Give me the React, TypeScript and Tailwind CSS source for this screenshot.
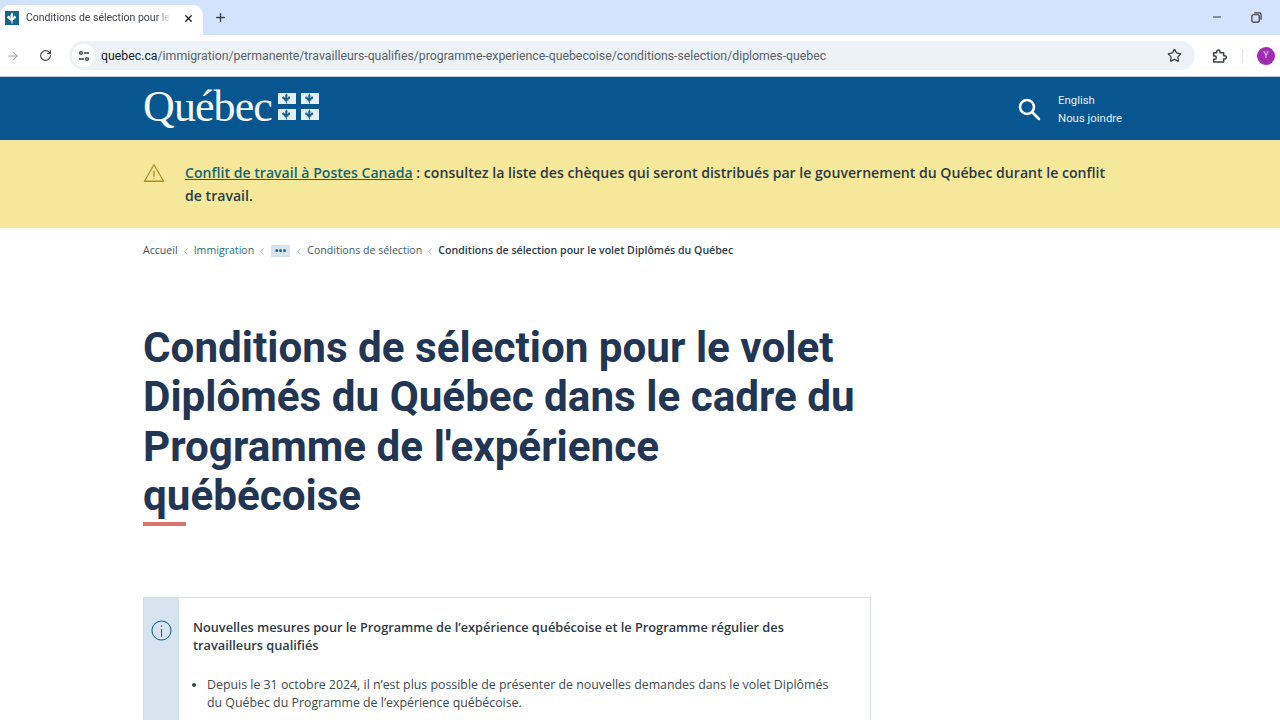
import React from "react";
import { ArrowRight, RotateCw, Star, Plus, X, Minus } from "lucide-react";

const Lis = ({ className = "", fill = "#fff" }: { className?: string; fill?: string }) => (
  <svg viewBox="0 0 24 24" className={className} fill={fill}>
    <path d="M12 1c2.2 2.2 3 4.6 1.6 8l-.5 2h1.2l.6-2c.6-1.4 2.2-1.9 3.6-1.2 1.7.8 2.1 3 1.2 4.4-.9 1.3-2.6 1.9-3.4 1 .4 1.2.1 2.3-1.1 3h-.6l-1.4.5.7 1.8c-1.2 0-1.9-.5-2.6-1.3-.7.8-1.4 1.3-2.6 1.3l.7-1.8-1.4-.5h-.6c-1.2-.7-1.5-1.8-1.1-3-.8.9-2.5.3-3.4-1-.9-1.4-.5-3.6 1.2-4.4 1.4-.7 3-.2 3.6 1.2l.6 2h1.2l-.5-2C9 5.6 9.8 3.2 12 1z" />
    <path d="M10.9 18h2.2v5h-2.2z" />
  </svg>
);

const Flag = () => (
  <div className="grid grid-cols-2 gap-x-[5px] gap-y-[5px] ml-[6px] -mt-[5px]">
    {[0, 1, 2, 3].map((i) => (
      <div key={i} className="w-[18px] h-[11px] bg-[#e4f0f6] flex items-center justify-center">
        <Lis className="w-[11px] h-[11px]" fill="#17648f" />
      </div>
    ))}
  </div>
);

const Sep = () => (
  <svg viewBox="0 0 4 8" className="w-[4px] h-[7px] mx-[6px] shrink-0" fill="none" stroke="#9aa5ae" strokeWidth="0.9">
    <path d="M3.5 0.5 L0.6 4 L3.5 7.5" />
  </svg>
);

export default function App() {
  return (
    <div className="w-[1280px] h-[720px] overflow-hidden bg-white font-['Open_Sans',sans-serif] text-[#223654]">
      {/* tab strip */}
      <div className="h-[35px] bg-[#d3e3fd] flex items-end relative">
        <div className="w-[203px] h-[30px] bg-white rounded-t-[10px] flex items-center pl-[5px] pb-[4px] font-['Roboto',sans-serif]">
          <div className="w-[14px] h-[14px] bg-[#17648f] flex items-center justify-center shrink-0">
            <Lis className="w-[12px] h-[12px]" />
          </div>
          <span className="ml-[7px] text-[10.5px] text-[#3f4347] whitespace-nowrap overflow-hidden w-[145px] [mask-image:linear-gradient(to_right,black_90%,transparent)]">
            Conditions de sélection pour le volet
          </span>
          <X className="w-[11px] h-[11px] ml-[12px] text-[#202124]" strokeWidth={3} />
        </div>
        <Plus className="w-[13px] h-[13px] ml-[11px] mb-[11px] text-[#3c4043]" strokeWidth={2.5} />
        <div className="ml-auto flex items-center mb-[12px]">
          <Minus className="w-[12px] h-[12px] text-[#333]" strokeWidth={2} />
          <svg viewBox="0 0 12 12" className="w-[11px] h-[11px] ml-[28px] mr-[18px]" fill="none" stroke="#333" strokeWidth="1.3">
            <rect x="1" y="3" width="8" height="8" rx="1.5" />
            <path d="M3.5 1h5.5a2 2 0 0 1 2 2v5.5" />
          </svg>
        </div>
      </div>
      {/* toolbar */}
      <div className="h-[41px] bg-white flex items-center border-b border-[#b9cddb] box-content">
        <ArrowRight className="w-[14px] h-[14px] ml-[6px] text-[#9aa0a6]" strokeWidth={1.75} />
        <RotateCw className="w-[13px] h-[13px] ml-[19px] text-[#3c4043]" strokeWidth={2} />
        <div className="ml-[17px] w-[1126px] h-[29px] rounded-full bg-[#edf2f6] flex items-center">
          <div className="w-[23px] h-[23px] ml-[3px] rounded-full bg-white flex items-center justify-center">
            <svg viewBox="0 0 12 12" className="w-[12px] h-[12px]" fill="none" stroke="#3c4043" strokeWidth="1.3">
              <circle cx="3" cy="3" r="1.4" />
              <path d="M6 3h5M1 9h5" />
              <circle cx="9" cy="9" r="1.4" />
            </svg>
          </div>
          <span className="ml-[6px] pt-[1px] text-[12.3px] font-['Roboto',sans-serif] text-[#5b6168] whitespace-nowrap">
            <span className="text-[#202124]">quebec.ca</span>/immigration/permanente/travailleurs-qualifies/programme-experience-quebecoise/conditions-selection/diplomes-quebec
          </span>
          <Star className="w-[15px] h-[15px] ml-auto mr-[13px] text-[#3c4043]" strokeWidth={2} />
        </div>
        <svg viewBox="0 0 24 24" className="w-[16px] h-[16px] ml-[16px]" fill="none" stroke="#3c4043" strokeWidth="2.2" strokeLinejoin="round">
          <path d="M4 7h4.5V5.5a2.5 2.5 0 0 1 5 0V7H19v4.5h1.5a2.5 2.5 0 0 1 0 5H19V21H4v-4h1.5a2.5 2.5 0 0 0 0-5H4z" />
        </svg>
        <div className="w-px h-[14px] bg-[#dfe3e8] ml-[15px]" />
        <div className="w-[18px] h-[18px] ml-[14px] rounded-full bg-[#a12bb3] text-[#e8cfee] text-[9px] flex items-center justify-center font-['Roboto',sans-serif]">Y</div>
      </div>
      {/* header */}
      <div className="h-[63px] bg-[#08568f] flex items-center pl-[143px] pr-[158px]">
        <span className="font-['Liberation_Serif',serif] text-[44px] leading-none tracking-[-0.9px] text-[#f4fafc] -mt-[3px]">Québec</span>
        <Flag />
        <svg viewBox="0 0 24 24" className="w-[24px] h-[24px] ml-auto -translate-x-px" fill="none" stroke="#fff" strokeWidth="2.6" strokeLinecap="round">
          <circle cx="10" cy="10" r="7" />
          <path d="M15.5 15.5 L22 22" />
        </svg>
        <div className="ml-[16px] w-[64px] font-['Roboto',sans-serif] text-[11.4px] leading-[18px] text-[#e0f0fa] whitespace-nowrap">
          <div>English</div>
          <div>Nous joindre</div>
        </div>
      </div>
      {/* alert */}
      <div className="h-[88px] bg-[#f5e89b] pl-[143px] pt-[22px] flex">
        <svg viewBox="0 0 24 24" className="w-[22px] h-[22px] shrink-0" fill="none" stroke="#b08d2c" strokeWidth="1.4" strokeLinejoin="round">
          <path d="M12 3 L22.5 21 H1.5 Z" />
          <path d="M12 9.5v6.5M12 17.6v1" />
        </svg>
        <p className="ml-[20px] w-[930px] text-[14.1px] leading-[22.6px] font-semibold text-[#2c3a45]">
          <a className="underline text-[#17656f]">Conflit de travail à Postes Canada</a> : consultez la liste des chèques qui seront distribués par le gouvernement du Québec durant le conflit de travail.
        </p>
      </div>
      {/* breadcrumb */}
      <div className="h-[44px] pl-[143px] pt-[2px] flex items-center text-[10.6px] whitespace-nowrap">
        <span className="text-[#44525f]">Accueil</span>
        <Sep />
        <span className="text-[#2a6f7c]">Immigration</span>
        <Sep />
        <span className="w-[19px] h-[12px] -mt-[1px] bg-[#d5e4ef] flex items-center justify-center text-[#17578a] font-bold text-[9px] leading-none tracking-[0.5px] mx-[1px]">•••</span>
        <Sep />
        <span className="text-[#3c5a6a]">Conditions de sélection</span>
        <Sep />
        <span className="font-semibold text-[#2c3a45]">Conditions de sélection pour le volet Diplômés du Québec</span>
      </div>
      {/* content */}
      <div className="pl-[143px]">
        <h1 className="mt-[51px] w-[728px] font-['Roboto',sans-serif] font-bold text-[42.2px] leading-[49.33px] text-[#223654]">
          Conditions de sélection pour le volet Diplômés du Québec dans le cadre du Programme de l'expérience québécoise
        </h1>
        <div className="w-[43px] h-[4px] bg-[#d4776e] mt-[2px]" />
        <div className="mt-[71px] w-[728px] border border-[#d7dfe5] flex h-[200px]">
          <div className="w-[35px] bg-[#d5e4ef] shrink-0 flex justify-center pt-[22px]">
            <svg viewBox="0 0 22 22" className="w-[21px] h-[21px]" fill="none" stroke="#17648f" strokeWidth="1.1">
              <circle cx="11" cy="11" r="10" />
              <path d="M11 9.5v8M11 5.5v1.5" />
            </svg>
          </div>
          <div className="pl-[14px] pt-[20px]">
            <p className="font-semibold text-[12.75px] leading-[18px] text-[#2c3a45] w-[640px]">
              Nouvelles mesures pour le Programme de l’expérience québécoise et le Programme régulier des travailleurs qualifiés
            </p>
            <ul className="mt-[22px] pl-[14px] w-[647px] list-disc text-[12.36px] leading-[18px] text-[#3c4a50]">
              <li>Depuis le 31 octobre 2024, il n’est plus possible de présenter de nouvelles demandes dans le volet Diplômés du Québec du Programme de l’expérience québécoise.</li>
            </ul>
          </div>
        </div>
      </div>
    </div>
  );
}
